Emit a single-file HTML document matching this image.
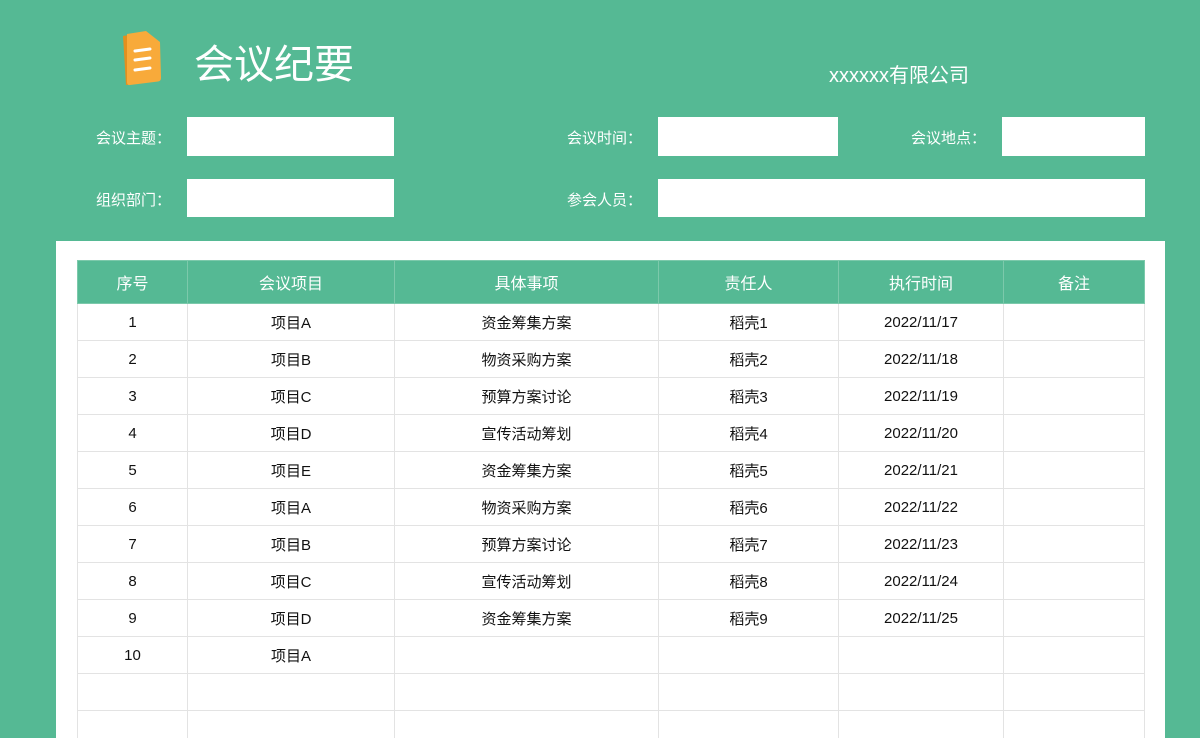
<!DOCTYPE html>
<html style="overflow:hidden;height:738px"><head><meta charset="utf-8"><style>
html,body{margin:0;padding:0}
body{width:1200px;height:738px;background:#55b994;position:relative;overflow:hidden;font-family:"Liberation Sans","Noto Sans CJK SC",sans-serif}
.a{position:absolute}
.lbl{color:#fff;font-size:15px}
.box{background:#fff}
table{position:absolute;left:77px;top:260px;border-collapse:collapse;table-layout:fixed}
td,th{border:1px solid #e3e3e3;text-align:center;font-size:15px;color:#111;height:36px;padding:0}
th{background:#55b994;color:#fff;font-weight:normal;height:42px;border-color:#7cc9ab;font-size:16px}
</style></head><body>
<svg class="a" style="left:118px;top:28px" width="50" height="60" viewBox="0 0 50 60">
<path d="M5 8 L27 4 L40 15 L40 52 L8 57 Z" fill="#e2901f"/>
<path d="M9 6 L28 3 L42 14 L43 50 Q43 53 40 53.5 L12 57 Q9 57.5 9 54 Z" fill="#f8aa3a"/>
<path d="M17 23 L32 21 M17 32 L32 30 M17 42 L32 40" stroke="#fff" stroke-width="3" stroke-linecap="round"/>
</svg>
<div class="a" style="left:194px;top:32px;color:#fff;font-size:40px">会议纪要</div>
<div class="a" style="left:829px;top:59px;color:#fff;font-size:20px">xxxxxx有限公司</div>
<div class="a lbl" style="left:96px;top:127px">会议主题：</div>
<div class="a box" style="left:187px;top:117px;width:207px;height:39px"></div>
<div class="a lbl" style="left:567px;top:127px">会议时间：</div>
<div class="a box" style="left:658px;top:117px;width:180px;height:39px"></div>
<div class="a lbl" style="left:911px;top:127px">会议地点：</div>
<div class="a box" style="left:1002px;top:117px;width:143px;height:39px"></div>
<div class="a lbl" style="left:96px;top:189px">组织部门：</div>
<div class="a box" style="left:187px;top:179px;width:207px;height:38px"></div>
<div class="a lbl" style="left:567px;top:189px">参会人员：</div>
<div class="a box" style="left:658px;top:179px;width:487px;height:38px"></div>
<div class="a box" style="left:56px;top:241px;width:1109px;height:497px;overflow:hidden">
<table style="left:21px;top:19px">
<colgroup><col style="width:110px"><col style="width:207px"><col style="width:264px"><col style="width:180px"><col style="width:165px"><col style="width:141px"></colgroup>
<tr><th>序号</th><th>会议项目</th><th>具体事项</th><th>责任人</th><th>执行时间</th><th>备注</th></tr>
<tr><td>1</td><td>项目A</td><td>资金筹集方案</td><td>稻壳1</td><td>2022/11/17</td><td></td></tr>
<tr><td>2</td><td>项目B</td><td>物资采购方案</td><td>稻壳2</td><td>2022/11/18</td><td></td></tr>
<tr><td>3</td><td>项目C</td><td>预算方案讨论</td><td>稻壳3</td><td>2022/11/19</td><td></td></tr>
<tr><td>4</td><td>项目D</td><td>宣传活动筹划</td><td>稻壳4</td><td>2022/11/20</td><td></td></tr>
<tr><td>5</td><td>项目E</td><td>资金筹集方案</td><td>稻壳5</td><td>2022/11/21</td><td></td></tr>
<tr><td>6</td><td>项目A</td><td>物资采购方案</td><td>稻壳6</td><td>2022/11/22</td><td></td></tr>
<tr><td>7</td><td>项目B</td><td>预算方案讨论</td><td>稻壳7</td><td>2022/11/23</td><td></td></tr>
<tr><td>8</td><td>项目C</td><td>宣传活动筹划</td><td>稻壳8</td><td>2022/11/24</td><td></td></tr>
<tr><td>9</td><td>项目D</td><td>资金筹集方案</td><td>稻壳9</td><td>2022/11/25</td><td></td></tr>
<tr><td>10</td><td>项目A</td><td></td><td></td><td></td><td></td></tr>
<tr><td></td><td></td><td></td><td></td><td></td><td></td></tr>
<tr><td></td><td></td><td></td><td></td><td></td><td></td></tr>
</table>
</div>
</body></html>
